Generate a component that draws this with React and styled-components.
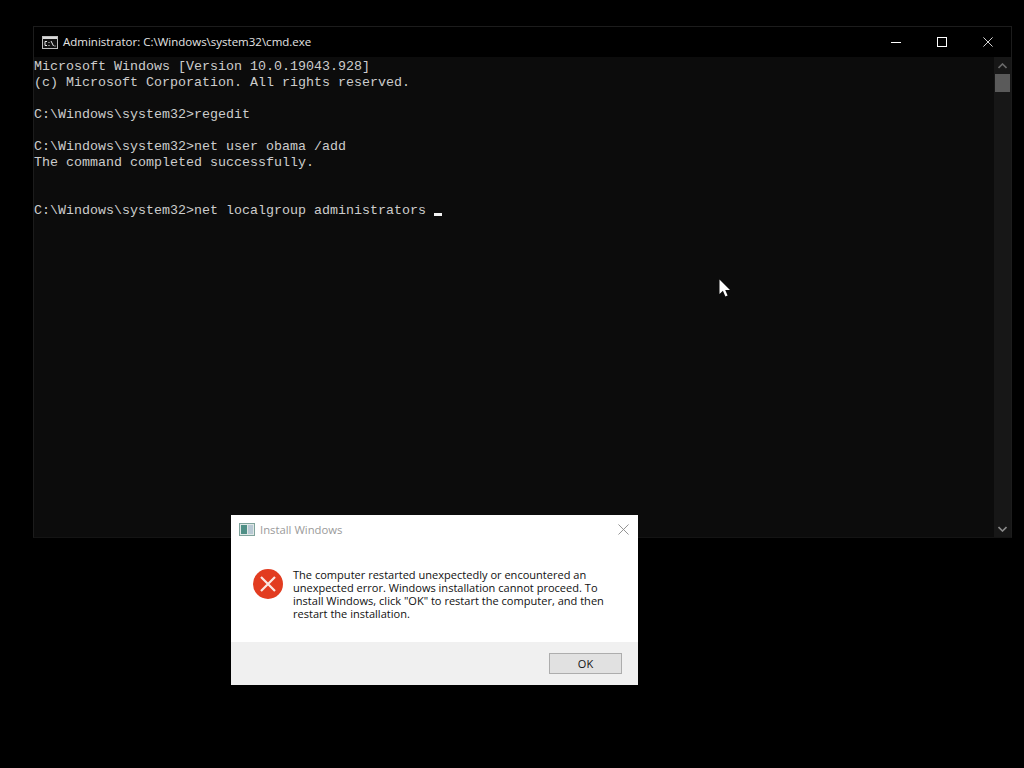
import React from 'react'
import styled, { createGlobalStyle } from 'styled-components'

const GlobalStyle = createGlobalStyle`
  html, body {
    margin: 0;
    padding: 0;
    background: #000;
  }
`

const Screen = styled.div`
  position: relative;
  width: 1024px;
  height: 768px;
  padding: 26px 12px 0 33px;
  box-sizing: border-box;
  overflow: hidden;
  background: #000;
`

const ConsoleWindow = styled.div`
  display: flex;
  flex-direction: column;
  width: 979px;
  height: 512px;
  box-sizing: border-box;
  border: 1px solid #1c1c1c;
  border-bottom-color: #141414;
  background: #0c0c0c;
`

const TitleBar = styled.div`
  display: flex;
  align-items: center;
  flex: 0 0 30px;
  padding-left: 8px;
  background: #000;
`

const TitleText = styled.span`
  margin: 0 0 2px 5px;
  font: 11.5px "Open Sans", sans-serif;
  color: #e4e4e4;
`

const WindowButton = styled.div`
  display: flex;
  align-items: center;
  justify-content: center;
  width: 46px;
  height: 30px;
  color: #fff;
  margin-left: ${p => (p.$first ? 'auto' : '0')};
`

const ConsoleBody = styled.div`
  display: flex;
  flex: 1;
  min-height: 0;
`

const Output = styled.pre`
  flex: 1;
  margin: 0;
  padding: 2px 0 0;
  font: 13.33px/16px "Liberation Mono", monospace;
  color: #cccccc;
`

const Caret = styled.span`
  display: inline-block;
  width: 8px;
  height: 3px;
  background: #f2f2f2;
  vertical-align: -2px;
`

const Scrollbar = styled.div`
  display: flex;
  flex-direction: column;
  align-items: center;
  width: 17px;
  background: #171717;
`

const ArrowSlot = styled.div`
  display: flex;
  align-items: center;
  justify-content: center;
  flex: 0 0 17px;
  width: 100%;
  margin-top: ${p => (p.$bottom ? 'auto' : '0')};
`

const Thumb = styled.div`
  width: 15px;
  height: 18px;
  background: #5a5a5a;
`

const Dialog = styled.div`
  position: absolute;
  left: 231px;
  top: 515px;
  display: flex;
  flex-direction: column;
  width: 407px;
  height: 170px;
  background: #fff;
  font-family: "Open Sans", sans-serif;
`

const DialogHeader = styled.div`
  display: flex;
  align-items: center;
  flex: 0 0 29px;
  padding: 0 9.5px 0 8px;
`

const DialogTitle = styled.span`
  margin-left: 5px;
  font-size: 11.3px;
  color: #9a9a9a;
`

const DialogClose = styled.div`
  display: flex;
  margin-left: auto;
  color: #8a8a8a;
`

const DialogBody = styled.div`
  display: flex;
  flex: 1;
  padding: 25px 22px 0;
`

const ErrorIcon = styled.svg`
  flex: none;
`

const Message = styled.p`
  margin: -1px 0 0 10px;
  font-size: 11.05px;
  line-height: 13px;
  white-space: nowrap;
  color: #111;
`

const DialogFooter = styled.div`
  display: flex;
  align-items: center;
  justify-content: flex-end;
  flex: 0 0 43px;
  padding-right: 16px;
  background: #f0f0f0;
`

const OkButton = styled.div`
  display: flex;
  align-items: center;
  justify-content: center;
  width: 73px;
  height: 21px;
  box-sizing: border-box;
  border: 1px solid #adadad;
  background: #e1e1e1;
  font-size: 11px;
  color: #111;
`

const Pointer = styled.svg`
  position: absolute;
  left: 719px;
  top: 279px;
`

const lines = `Microsoft Windows [Version 10.0.19043.928]
(c) Microsoft Corporation. All rights reserved.

C:\\Windows\\system32>regedit

C:\\Windows\\system32>net user obama /add
The command completed successfully.


C:\\Windows\\system32>net localgroup administrators `

const CmdIcon = () => (
  <svg width="16" height="13" viewBox="0 0 16 13">
    <rect x="0.5" y="0.5" width="15" height="12" fill="#111" stroke="#bdbdbd" />
    <rect x="1" y="1" width="14" height="2" fill="#d8d8d8" />
    <path d="M5 5.5H3v4h2M7 6v1M7 9v1M9 5l2.5 5M13 9.5v1" fill="none" stroke="#e8e8e8" />
  </svg>
)

const SetupIcon = () => (
  <svg width="16" height="14" viewBox="0 0 16 14">
    <rect x="0.5" y="0.5" width="15" height="12" fill="#dfe8e6" stroke="#7fa39c" />
    <rect x="2" y="2" width="6" height="9" fill="#4f8f86" />
    <rect x="9" y="2" width="5" height="9" fill="#b9c9d4" />
  </svg>
)

const Cross = ({ size }) => (
  <svg width={size} height={size} viewBox="0 0 12 12">
    <path d="M0.5 0.5l11 11M11.5 0.5l-11 11" stroke="currentColor" fill="none" />
  </svg>
)

const App = () => (
  <Screen>
    <GlobalStyle />
    <ConsoleWindow>
      <TitleBar>
        <CmdIcon />
        <TitleText>Administrator: C:\Windows\system32\cmd.exe</TitleText>
        <WindowButton $first>
          <svg width="10" height="10" viewBox="0 0 10 10">
            <path d="M0 5.5h10" stroke="currentColor" />
          </svg>
        </WindowButton>
        <WindowButton>
          <svg width="10" height="10" viewBox="0 0 10 10">
            <rect x="0.5" y="0.5" width="9" height="9" stroke="currentColor" fill="none" />
          </svg>
        </WindowButton>
        <WindowButton>
          <Cross size={10} />
        </WindowButton>
      </TitleBar>
      <ConsoleBody>
        <Output>
          {lines}
          <Caret />
        </Output>
        <Scrollbar>
          <ArrowSlot>
            <svg width="9" height="6" viewBox="0 0 9 6">
              <path d="M0.5 5L4.5 1l4 4" stroke="#6a6a6a" strokeWidth="1.6" fill="none" />
            </svg>
          </ArrowSlot>
          <Thumb />
          <ArrowSlot $bottom>
            <svg width="9" height="6" viewBox="0 0 9 6">
              <path d="M0.5 1L4.5 5l4-4" stroke="#8a8a8a" strokeWidth="1.6" fill="none" />
            </svg>
          </ArrowSlot>
        </Scrollbar>
      </ConsoleBody>
    </ConsoleWindow>
    <Pointer width="12" height="18" viewBox="0 0 12 18">
      <path d="M0.5 0.5V15l3.4-3.2L6.4 17.4 8.6 16.4 6.2 11H11z" fill="#fff" />
    </Pointer>
    <Dialog>
      <DialogHeader>
        <SetupIcon />
        <DialogTitle>Install Windows</DialogTitle>
        <DialogClose>
          <Cross size={11} />
        </DialogClose>
      </DialogHeader>
      <DialogBody>
        <ErrorIcon width="30" height="30" viewBox="0 0 30 30">
          <circle cx="15" cy="15" r="15" fill="#e23c20" />
          <path d="M8 8l14 14M22 8L8 22" stroke="#fbe9e4" strokeWidth="2.2" />
        </ErrorIcon>
        <Message>
          The computer restarted unexpectedly or encountered an<br />
          unexpected error. Windows installation cannot proceed. To<br />
          install Windows, click "OK" to restart the computer, and then<br />
          restart the installation.
        </Message>
      </DialogBody>
      <DialogFooter>
        <OkButton>OK</OkButton>
      </DialogFooter>
    </Dialog>
  </Screen>
)

export default App
